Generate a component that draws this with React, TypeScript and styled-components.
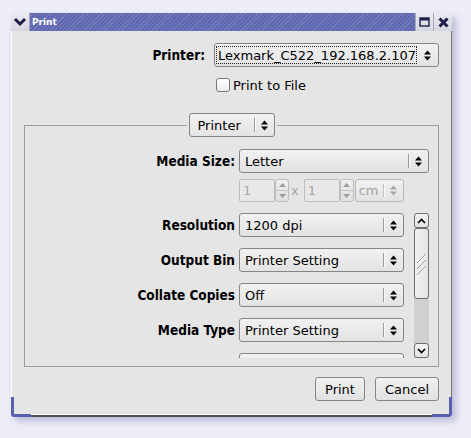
import React from "react";
import styled, { createGlobalStyle } from "styled-components";

const Global = createGlobalStyle`
  html, body { margin: 0; padding: 0; }
  body {
    background: #eeeef9;
    font-family: "DejaVu Sans", "Noto Sans", sans-serif;
    font-size: 13px;
    color: #000;
  }
`;

const Page = styled.div`
  width: 471px;
  height: 438px;
  box-sizing: border-box;
  padding: 13px 0 0 11px;
  overflow: hidden;
`;

const Window = styled.div`
  width: 441px;
  display: flex;
  flex-direction: column;
  box-shadow: 4px 4px 7px rgba(90, 90, 150, 0.35);
`;

const TitleBar = styled.div`
  display: flex;
  height: 18px;
`;

const TitleButton = styled.div<{ $w: number }>`
  width: ${(p) => p.$w}px;
  display: flex;
  align-items: center;
  justify-content: center;
  background: linear-gradient(#eaeaf0, #d6d6e0);
  border-left: 1px solid #a8a8bc;
  box-sizing: border-box;
  &:first-child {
    border-left: none;
    border-right: 1px solid #a8a8bc;
  }
`;

const TitleText = styled.div`
  flex: 1;
  display: flex;
  align-items: center;
  padding-left: 2px;
  color: #fff;
  font-weight: bold;
  font-size: 9px;
  background-color: #6068b2;
  background-image: repeating-linear-gradient(
    135deg,
    rgba(255, 255, 255, 0) 0px,
    rgba(255, 255, 255, 0) 2px,
    rgba(255, 255, 255, 0.13) 2px,
    rgba(255, 255, 255, 0.13) 3px
  );
`;

const Body = styled.div`
  position: relative;
  background: #e5e5e5;
  padding: 12px 13px 13px;
  box-shadow: inset 1px 0 0 #fbfbfb, inset -1px 0 0 #7a7a7a;
  &::before,
  &::after {
    content: "";
    position: absolute;
    bottom: 0;
    width: 3px;
    height: 17px;
    background: #5860b0;
  }
  &::before { left: 0; }
  &::after { right: 0; }
`;

const BottomEdge = styled.div`
  display: flex;
  height: 3px;
`;

const Corner = styled.div<{ $side: "l" | "r" }>`
  width: 20px;
  background: #5860b0;
  border-bottom-${(p) => (p.$side === "l" ? "left" : "right")}-radius: 3px;
`;

const EdgeMiddle = styled.div`
  flex: 1;
  background: #505050;
  border-top: 1px solid #ffffff;
`;

const TopGrid = styled.div`
  display: grid;
  grid-template-columns: 1fr 225px;
  column-gap: 9px;
  row-gap: 10px;
  align-items: center;
`;

const Label = styled.div`
  font-family: "DejaVu Sans Condensed", "DejaVu Sans", sans-serif;
  font-weight: bold;
  font-size: 13.5px;
  text-align: right;
  white-space: nowrap;
`;

const ComboBox = styled.div<{ $disabled?: boolean; $width?: number }>`
  display: flex;
  align-items: center;
  height: 24px;
  box-sizing: border-box;
  ${(p) => (p.$width ? `width: ${p.$width}px;` : "")}
  border: 1px solid ${(p) => (p.$disabled ? "#b6b6b6" : "#858585")};
  border-radius: 3px;
  background: linear-gradient(#f1f1f1, #e3e3e3);
  color: ${(p) => (p.$disabled ? "#a4a4a4" : "#000")};
  min-width: 0;
`;

const ComboText = styled.span<{ $pad?: number }>`
  flex: 1;
  padding-left: ${(p) => p.$pad ?? 5}px;
  white-space: nowrap;
  overflow: hidden;
`;

const FocusText = styled.span`
  flex: 1;
  align-self: stretch;
  margin: 2px 0 2px 1px;
  padding-left: 2px;
  display: flex;
  align-items: center;
  outline: 1px dotted #222;
  outline-offset: -1px;
  white-space: nowrap;
  overflow: hidden;
`;

const ComboSep = styled.span<{ $disabled?: boolean }>`
  width: 1px;
  align-self: stretch;
  margin: 4px 0;
  background: ${(p) => (p.$disabled ? "#c0c0c0" : "#9a9a9a")};
  box-shadow: 1px 0 0 #fafafa;
`;

const ComboArrow = styled.span<{ $w?: number }>`
  width: ${(p) => p.$w ?? 19}px;
  display: flex;
  align-items: center;
  justify-content: center;
`;

const CheckRow = styled.label`
  display: flex;
  align-items: center;
  gap: 3px;
  height: 16px;
  margin-left: 2px;
`;

const CheckBox = styled.span`
  width: 14px;
  height: 14px;
  box-sizing: border-box;
  border: 1px solid #777;
  border-radius: 3px;
  background: linear-gradient(#ffffff, #ececec);
`;

const Frame = styled.fieldset`
  margin: 20px 0 0;
  padding: 12px 9px 8px;
  border: 1px solid #9c9c9c;
  min-width: 0;
`;

const Legend = styled.legend`
  margin: 0 auto;
  padding: 0 2px;
`;

const FormGrid = styled.div<{ $field: number; $gap: number }>`
  display: grid;
  grid-template-columns: 1fr ${(p) => p.$field}px;
  column-gap: 4px;
  row-gap: ${(p) => p.$gap}px;
  align-items: center;
`;

const SpinRow = styled.div`
  display: flex;
  align-items: center;
  height: 23px;
`;

const Entry = styled.div`
  width: 36px;
  height: 23px;
  box-sizing: border-box;
  border: 1px solid #bdbdbd;
  border-radius: 2px;
  background: #e8e8e8;
  color: #a6a6a6;
  padding-left: 3px;
  line-height: 21px;
`;

const SpinButtons = styled.div`
  width: 14px;
  height: 23px;
  box-sizing: border-box;
  display: flex;
  flex-direction: column;
  border: 1px solid #bdbdbd;
  border-radius: 3px;
  background: linear-gradient(#eeeeee, #e0e0e0);
`;

const SpinHalf = styled.div`
  flex: 1;
  display: flex;
  align-items: center;
  justify-content: center;
  & + & { border-top: 1px solid #c4c4c4; }
`;

const XLabel = styled.span`
  color: #a6a6a6;
  padding: 0 5px 0 2px;
`;

const CmCombo = styled(ComboBox)`
  width: 49px;
  margin-left: 1px;
  height: 23px;
`;

const ScrollArea = styled.div`
  display: flex;
  height: 145px;
  margin-top: 11px;
`;

const Viewport = styled.div`
  flex: 1;
  overflow: hidden;
`;

const Scrollbar = styled.div`
  width: 15px;
  margin-left: 10px;
  display: flex;
  flex-direction: column;
  background: #d0d0d0;
`;

const ScrollButton = styled.div`
  height: 15px;
  box-sizing: border-box;
  border: 1px solid #6e6e6e;
  border-radius: 3px;
  background: linear-gradient(#f4f4f4, #e2e2e2);
  display: flex;
  align-items: center;
  justify-content: center;
`;

const Thumb = styled.div`
  height: 71px;
  box-sizing: border-box;
  border: 1px solid #6e6e6e;
  border-radius: 3px;
  background: linear-gradient(90deg, #f0f0f0, #e4e4e4);
  display: flex;
  align-items: center;
  justify-content: center;
`;

const Trough = styled.div`
  flex: 1;
`;

const ButtonRow = styled.div`
  display: flex;
  justify-content: flex-end;
  gap: 10px;
  margin-top: 10px;
`;

const PushButton = styled.button`
  height: 24px;
  padding: 0 9px;
  font: inherit;
  color: #000;
  border: 1px solid #858585;
  border-radius: 3px;
  background: linear-gradient(#f1f1f1, #e1e1e1);
`;

const UpDown: React.FC<{ color?: string }> = ({ color = "#000" }) => (
  <svg width="7" height="11" viewBox="0 0 7 11">
    <path d="M0 4.5 L3.5 0.5 L7 4.5 Z" fill={color} />
    <path d="M0 6.5 L3.5 10.5 L7 6.5 Z" fill={color} />
  </svg>
);

const Tri: React.FC<{ up?: boolean }> = ({ up }) => (
  <svg width="7" height="4" viewBox="0 0 7 4">
    <path d={up ? "M0 4 L3.5 0 L7 4 Z" : "M0 0 L3.5 4 L7 0 Z"} fill="#9c9c9c" />
  </svg>
);

const Chevron: React.FC<{ up?: boolean }> = ({ up }) => (
  <svg width="9" height="6" viewBox="0 0 9 6">
    <polyline
      points={up ? "1,5 4.5,1.5 8,5" : "1,1 4.5,4.5 8,1"}
      fill="none"
      stroke="#000"
      strokeWidth="1.7"
    />
  </svg>
);

type ComboProps = {
  value: string;
  width?: number;
  pad?: number;
  disabled?: boolean;
};

const Combo: React.FC<ComboProps> = ({ value, width, pad, disabled }) => (
  <ComboBox $width={width} $disabled={disabled}>
    <ComboText $pad={pad}>{value}</ComboText>
    <ComboSep $disabled={disabled} />
    <ComboArrow>
      <UpDown color={disabled ? "#a8a8a8" : "#000"} />
    </ComboArrow>
  </ComboBox>
);

const Spin: React.FC<{ value: string }> = ({ value }) => (
  <>
    <Entry>{value}</Entry>
    <SpinButtons>
      <SpinHalf>
        <Tri up />
      </SpinHalf>
      <SpinHalf>
        <Tri />
      </SpinHalf>
    </SpinButtons>
  </>
);

const options: [string, string][] = [
  ["Resolution", "1200 dpi"],
  ["Output Bin", "Printer Setting"],
  ["Collate Copies", "Off"],
  ["Media Type", "Printer Setting"],
  ["", ""],
];

export default function App() {
  return (
    <Page>
      <Global />
      <Window>
        <TitleBar>
          <TitleButton $w={19}>
            <svg width="14" height="10" viewBox="0 0 14 10">
              <polyline points="2,2 7,7 12,2" fill="none" stroke="#1e1e4a" strokeWidth="3" />
            </svg>
          </TitleButton>
          <TitleText>Print</TitleText>
          <TitleButton $w={18}>
            <svg width="11" height="10" viewBox="0 0 11 10">
              <rect x="1" y="1" width="9" height="8" fill="none" stroke="#1e1e4a" strokeWidth="1.4" />
              <rect x="1" y="1" width="9" height="2.5" fill="#1e1e4a" />
            </svg>
          </TitleButton>
          <TitleButton $w={19}>
            <svg width="11" height="11" viewBox="0 0 11 11">
              <path d="M1.5 1.5 L9.5 9.5 M9.5 1.5 L1.5 9.5" stroke="#1e1e4a" strokeWidth="3" />
            </svg>
          </TitleButton>
        </TitleBar>

        <Body>
          <TopGrid>
            <Label>Printer:</Label>
            <ComboBox>
              <FocusText>Lexmark_C522_192.168.2.107</FocusText>
              <ComboArrow $w={21}>
                <UpDown />
              </ComboArrow>
            </ComboBox>
            <span />
            <CheckRow>
              <CheckBox />
              Print to File
            </CheckRow>
          </TopGrid>

          <Frame>
            <Legend>
              <Combo value="Printer" width={86} pad={8} />
            </Legend>

            <FormGrid $field={190} $gap={6}>
              <Label>Media Size:</Label>
              <Combo value="Letter" />
              <span />
              <SpinRow>
                <Spin value="1" />
                <XLabel>x</XLabel>
                <Spin value="1" />
                <CmCombo $disabled>
                  <ComboText $pad={3}>cm</ComboText>
                  <ComboSep $disabled />
                  <ComboArrow>
                    <UpDown color="#a8a8a8" />
                  </ComboArrow>
                </CmCombo>
              </SpinRow>
            </FormGrid>

            <ScrollArea>
              <Viewport>
                <FormGrid $field={165} $gap={11}>
                  {options.map(([label, value], i) => (
                    <React.Fragment key={i}>
                      <Label>{label}</Label>
                      <Combo value={value} />
                    </React.Fragment>
                  ))}
                </FormGrid>
              </Viewport>
              <Scrollbar>
                <ScrollButton>
                  <Chevron up />
                </ScrollButton>
                <Thumb>
                  <svg width="11" height="24" viewBox="0 0 11 24">
                    <path d="M1 11 L10 2 M1 17 L10 8 M1 23 L10 14" stroke="#9a9a9a" strokeWidth="1" />
                    <path d="M1 12 L10 3 M1 18 L10 9 M1 24 L10 15" stroke="#ffffff" strokeWidth="1" />
                  </svg>
                </Thumb>
                <Trough />
                <ScrollButton>
                  <Chevron />
                </ScrollButton>
              </Scrollbar>
            </ScrollArea>
          </Frame>

          <ButtonRow>
            <PushButton>Print</PushButton>
            <PushButton>Cancel</PushButton>
          </ButtonRow>
        </Body>
        <BottomEdge>
          <Corner $side="l" />
          <EdgeMiddle />
          <Corner $side="r" />
        </BottomEdge>
      </Window>
    </Page>
  );
}
